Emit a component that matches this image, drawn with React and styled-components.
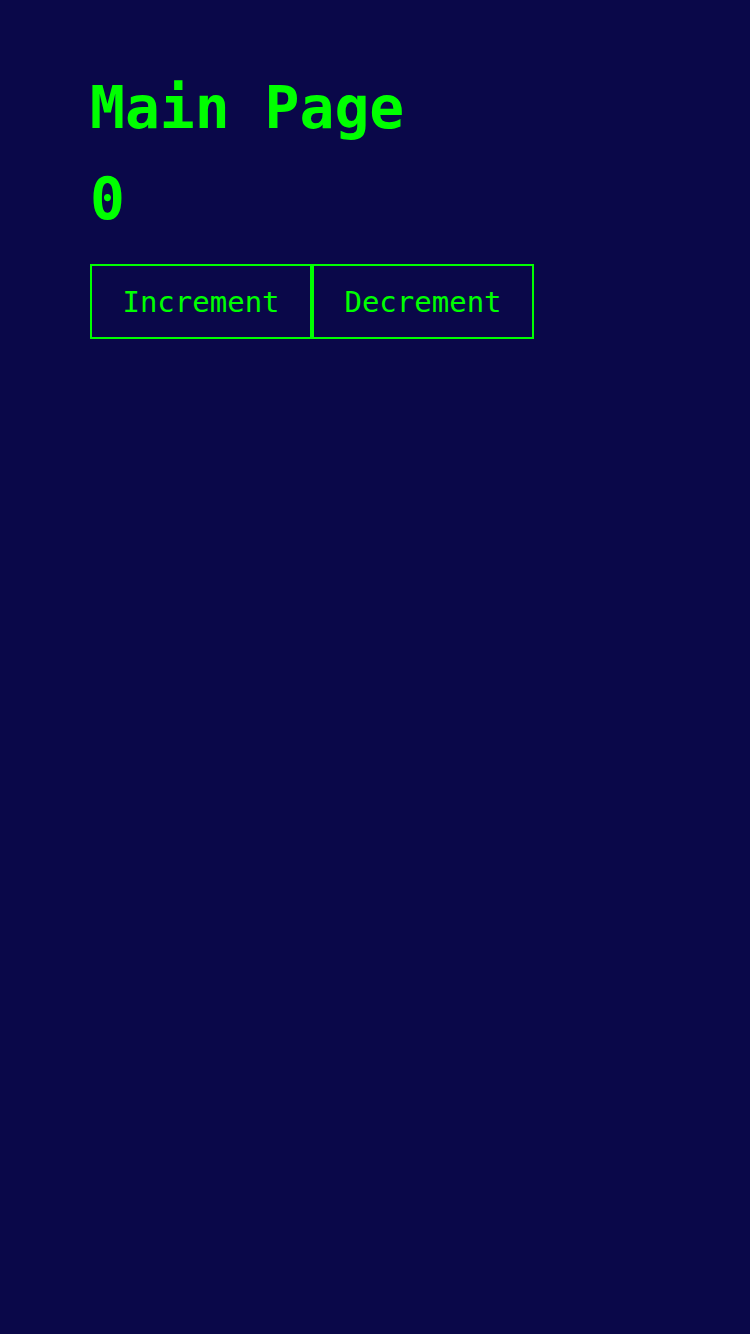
import React, { useState } from 'react';
import styled, { createGlobalStyle } from 'styled-components';

const mono = `'DejaVu Sans Mono', monospace`;

const GlobalStyle = createGlobalStyle`
    html, body {
        margin: 0;
        padding: 0;
        background: #0a0849;
        min-height: 100%;
    }
`;

const Page = styled.div`
    min-height: 1334px;
    box-sizing: border-box;
    padding: 63px 90px;
    background: #0a0849;
    color: #00ff00;
    font-family: ${mono};
`;

const Title = styled.h1`
    margin: 0;
    font-size: 58px;
    font-weight: bold;
    line-height: 91px;
`;

const Count = styled.div`
    font-size: 58px;
    font-weight: bold;
    line-height: 91px;
`;

const Controls = styled.div`
    display: flex;
    margin-top: 19px;
`;

const Button = styled.button`
    width: 222px;
    height: 75px;
    box-sizing: border-box;
    border: 2px solid #00ff00;
    background: transparent;
    color: #00ff00;
    font-family: ${mono};
    font-size: 29px;
    padding: 0;
    cursor: pointer;
`;

export default function App() {
    const [count, setCount] = useState(0);

    return (
        <>
            <GlobalStyle />
            <Page>
                <Title>Main Page</Title>
                <Count>{count}</Count>
                <Controls>
                    <Button onClick={() => setCount(count + 1)}>Increment</Button>
                    <Button onClick={() => setCount(count - 1)}>Decrement</Button>
                </Controls>
            </Page>
        </>
    );
}
